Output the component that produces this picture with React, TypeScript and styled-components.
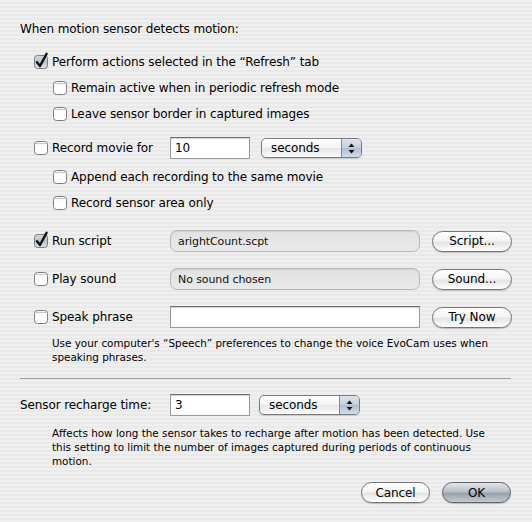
import styled, { createGlobalStyle } from "styled-components";

const GlobalStyle = createGlobalStyle`
  html, body {
    margin: 0;
    padding: 0;
  }
  body {
    font-family: "DejaVu Sans", "Lucida Grande", sans-serif;
    color: #000;
  }
`;

function Checkbox({ checked }: { checked?: boolean }) {
  return (
    <CheckSvg width="14" height="14" viewBox="0 0 14 14">
      <defs>
        <linearGradient id={checked ? "cbOn" : "cbOff"} x1="0" y1="0" x2="0" y2="1">
          {checked ? (
            <>
              <stop offset="0" stopColor="#d5dbe4" />
              <stop offset="0.5" stopColor="#b8c2cf" />
              <stop offset="1" stopColor="#dfe5ec" />
            </>
          ) : (
            <>
              <stop offset="0" stopColor="#f4f4f4" />
              <stop offset="0.5" stopColor="#ffffff" />
              <stop offset="1" stopColor="#fdfdfd" />
            </>
          )}
        </linearGradient>
      </defs>
      <rect
        x="0.5"
        y="0.5"
        width="13"
        height="13"
        rx="3"
        fill={`url(#${checked ? "cbOn" : "cbOff"})`}
        stroke="#7d7d7d"
      />
      <path d="M1.5 2.5 H12.5" stroke="#c8c8c8" strokeWidth="1" />
      {checked && (
        <path
          d="M3 7.2 L6 11 L12.6 -1.2"
          fill="none"
          stroke="#111"
          strokeWidth="2.4"
          strokeLinejoin="round"
          strokeLinecap="round"
        />
      )}
    </CheckSvg>
  );
}

function PopUp({ label, ml }: { label: string; ml: number }) {
  return (
    <PopUpBox style={{ marginLeft: ml }}>
      <PopUpLabel>{label}</PopUpLabel>
      <PopUpArrows>
        <svg width="7" height="11" viewBox="0 0 7 11">
          <path d="M3.5 0.5 L6.5 4 H0.5 Z" fill="#111" />
          <path d="M3.5 10.5 L6.5 7 H0.5 Z" fill="#111" />
        </svg>
      </PopUpArrows>
    </PopUpBox>
  );
}

export default function App() {
  return (
    <Window>
      <GlobalStyle />
      <Heading>When motion sensor detects motion:</Heading>

      <Section>
        <Row $mt={7}>
          <CheckLabel>
            <Checkbox checked />
            Perform actions selected in the “Refresh” tab
          </CheckLabel>
        </Row>
        <SubSection>
          <Row>
            <CheckLabel>
              <Checkbox />
              Remain active when in periodic refresh mode
            </CheckLabel>
          </Row>
          <Row>
            <CheckLabel>
              <Checkbox />
              Leave sensor border in captured images
            </CheckLabel>
          </Row>
        </SubSection>

        <Row $mt={8}>
          <LabelCell $w={136}>
            <Checkbox />
            Record movie for
          </LabelCell>
          <TextField $w={80}>10</TextField>
          <PopUp label="seconds" ml={11} />
        </Row>
        <SubSection>
          <Row $mt={3}>
            <CheckLabel>
              <Checkbox />
              Append each recording to the same movie
            </CheckLabel>
          </Row>
          <Row>
            <CheckLabel>
              <Checkbox />
              Record sensor area only
            </CheckLabel>
          </Row>
        </SubSection>

        <Row $mt={12}>
          <LabelCell $w={136}>
            <Checkbox checked />
            Run script
          </LabelCell>
          <StaticField>arightCount.scpt</StaticField>
          <PillButton>Script...</PillButton>
        </Row>
        <Row $mt={12}>
          <LabelCell $w={136}>
            <Checkbox />
            Play sound
          </LabelCell>
          <StaticField>No sound chosen</StaticField>
          <PillButton>Sound...</PillButton>
        </Row>
        <Row $mt={12}>
          <LabelCell $w={136}>
            <Checkbox />
            Speak phrase
          </LabelCell>
          <TextField $w={250} />
          <PillButton>Try Now</PillButton>
        </Row>
        <Note $mt={6} $indent={18}>
          Use your computer's “Speech” preferences to change the voice EvoCam uses when
          <br />
          speaking phrases.
        </Note>
      </Section>

      <Separator />

      <Row $mt={13}>
        <LabelCell $w={150}>Sensor recharge time:</LabelCell>
        <TextField $w={80}>3</TextField>
        <PopUp label="seconds" ml={9} />
      </Row>
      <Note $mt={8} $indent={32}>
        Affects how long the sensor takes to recharge after motion has been detected. Use
        <br />
        this setting to limit the number of images captured during periods of continuous
        <br />
        motion.
      </Note>

      <ButtonBar>
        <PillButton $w={69}>Cancel</PillButton>
        <PillButton $w={69} $primary>
          OK
        </PillButton>
      </ButtonBar>
    </Window>
  );
}

const Window = styled.div`
  width: 532px;
  height: 522px;
  box-sizing: border-box;
  padding: 16px 21px 0 20px;
  display: flex;
  flex-direction: column;
  font-size: 12px;
  letter-spacing: -0.1px;
  background: repeating-linear-gradient(
    to bottom,
    #efefef 0px,
    #efefef 2px,
    #e9e9e9 2px,
    #e9e9e9 4px
  );
  overflow: hidden;
`;

const Heading = styled.div`
  height: 26px;
  display: flex;
  align-items: center;
`;

const Section = styled.div`
  display: flex;
  flex-direction: column;
  padding-left: 14px;
`;

const SubSection = styled.div`
  display: flex;
  flex-direction: column;
  padding-left: 19px;
`;

const Row = styled.div<{ $mt?: number }>`
  height: 26px;
  margin-top: ${(p) => p.$mt ?? 0}px;
  display: flex;
  align-items: center;
`;

const CheckLabel = styled.label`
  display: flex;
  align-items: center;
  gap: 4px;
  white-space: nowrap;
`;

const LabelCell = styled(CheckLabel)<{ $w: number }>`
  width: ${(p) => p.$w}px;
  flex: none;
`;

const CheckSvg = styled.svg`
  flex: none;
  overflow: visible;
`;

const TextField = styled.div<{ $w: number }>`
  width: ${(p) => p.$w}px;
  height: 22px;
  box-sizing: border-box;
  flex: none;
  background: #fff;
  border: 1px solid #9a9a9a;
  border-top-color: #6f6f6f;
  box-shadow: inset 0 1px 1px rgba(0, 0, 0, 0.18);
  padding: 0 4px;
  display: flex;
  align-items: center;
  font-size: 12px;
`;

const StaticField = styled.div`
  width: 250px;
  height: 22px;
  box-sizing: border-box;
  flex: none;
  border-radius: 7px;
  border: 1px solid #b9b9b9;
  background: linear-gradient(#e2e2e2, #e9e9e9);
  box-shadow: inset 0 1px 1px rgba(0, 0, 0, 0.08);
  padding: 0 7px;
  display: flex;
  align-items: center;
  font-size: 11px;
  color: #111;
`;

const PopUpBox = styled.div`
  width: 101px;
  height: 20px;
  box-sizing: border-box;
  flex: none;
  display: flex;
  border: 1px solid #7c7c7c;
  border-radius: 5px;
  overflow: hidden;
  background: linear-gradient(#ffffff 0%, #f3f3f3 50%, #e6e6e6 51%, #fbfbfb 100%);
  box-shadow: 0 1px 1px rgba(0, 0, 0, 0.15);
`;

const PopUpLabel = styled.div`
  flex: 1;
  display: flex;
  align-items: center;
  padding-left: 9px;
  font-size: 12px;
`;

const PopUpArrows = styled.div`
  width: 19px;
  flex: none;
  display: flex;
  align-items: center;
  justify-content: center;
  border-left: 1px solid #8a8a8a;
  background: linear-gradient(#dde4ee 0%, #c3cedd 50%, #aebdd0 51%, #d3dde9 100%);
`;

const PillButton = styled.div<{ $w?: number; $primary?: boolean }>`
  width: ${(p) => p.$w ?? 80}px;
  height: 21px;
  box-sizing: border-box;
  flex: none;
  margin-left: 12px;
  border-radius: 11px;
  border: 1px solid ${(p) => (p.$primary ? "#5e636a" : "#767676")};
  background: ${(p) =>
    p.$primary
      ? "linear-gradient(#e3e6ea 0%, #b9c0c8 45%, #99a1ab 55%, #c4cad1 100%)"
      : "linear-gradient(#ffffff 0%, #f4f4f4 45%, #e4e4e4 55%, #ffffff 100%)"};
  box-shadow: 0 1px 1px rgba(0, 0, 0, 0.2);
  display: flex;
  align-items: center;
  justify-content: center;
  font-size: 12px;
`;

const Note = styled.div<{ $mt: number; $indent: number }>`
  margin-top: ${(p) => p.$mt}px;
  padding-left: ${(p) => p.$indent}px;
  font-size: 10.4px;
  line-height: 14px;
  letter-spacing: 0;
  white-space: nowrap;
`;

const Separator = styled.div`
  margin-top: 14px;
  height: 1px;
  background: #9c9c9c;
  flex: none;
`;

const ButtonBar = styled.div`
  margin-top: 14px;
  display: flex;
  justify-content: flex-end;
`;
